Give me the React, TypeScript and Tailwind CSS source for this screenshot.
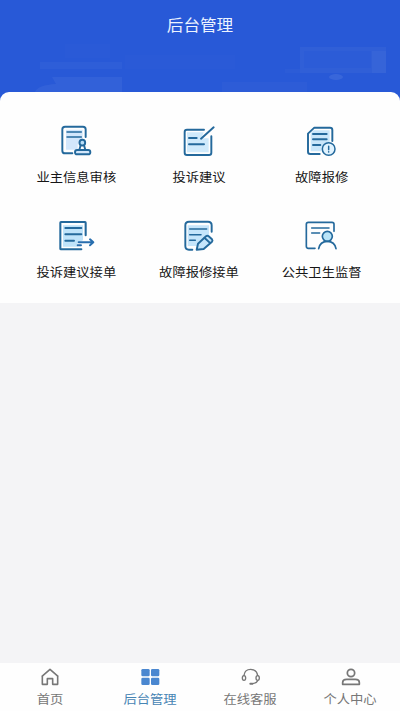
import React from "react";

const stroke = {
  fill: "none",
  stroke: "#24699c",
  strokeWidth: 5.8,
  strokeLinecap: "round" as const,
  strokeLinejoin: "round" as const,
};

const OwnerReviewIcon = () => (
  <svg className="w-[60px] h-[50px]" viewBox="-11 0 180 150" {...stroke}>
    <path d="M49 44H99V76L84 88V104H49Z" fill="#d3e7fb" stroke="none" />
    <path d="M108 66V43Q108 35 100 35H46Q38 35 38 43V107Q38 115 46 115H68" />
    <path d="M52 51H95M52 66H95" strokeWidth={4.5} />
    <circle cx="98" cy="83" r="8.5" fill="#b9def8" />
    <path d="M93 91L89 104M103 91L107 104" />
    <rect x="76" y="105" width="46" height="13" rx="6.5" fill="#d3e7fb" />
  </svg>
);

const ComplaintIcon = () => (
  <svg className="w-[60px] h-[50px]" viewBox="-3 0 180 150" {...stroke}>
    <path d="M51 52H101L94 70H116V112H51Z" fill="#d0eafb" stroke="none" />
    <path d="M102 44H51Q44 44 44 51V113Q44 120 51 120H117Q124 120 124 113V64" />
    <path d="M57 69H80M57 88H102" />
    <path d="M93 71L131 37" />
  </svg>
);

const RepairIcon = () => (
  <svg className="w-[60px] h-[50px]" viewBox="5 0 180 150" {...stroke}>
    <path d="M61 55L70 46H118V86L94 100V109H61Z" fill="#c9e6fa" stroke="none" />
    <path d="M126 78V45Q126 38 119 38H72L53 56V110Q53 117 60 117H88" />
    <path d="M68 57H109M68 73H109M68 90H90" />
    <circle cx="115" cy="102" r="19" fill="#e0f3ff" strokeWidth={4.5} />
    <path d="M115 94V104M115 110V111" strokeWidth={4.5} />
  </svg>
);

const ComplaintOrderIcon = () => (
  <svg className="w-[60px] h-[50px]" viewBox="-11 0 180 150" {...stroke}>
    <path d="M40 46H100V91L84 98V110H40Z" fill="#bfe3fa" stroke="none" />
    <path d="M108 76V38Q108 36 106 36H34Q32 36 32 38V116Q32 118 34 118H95" strokeWidth={6.2} />
    <path d="M47 54H95M47 73H95M47 92H73" />
    <path d="M87 97H130M121 88L131 97L121 106M84 106H94" stroke="#286eae" />
  </svg>
);

const RepairOrderIcon = () => (
  <svg className="w-[60px] h-[50px]" viewBox="-3 0 180 150" {...stroke}>
    <path d="M53 46H117V82L80 108H53Z" fill="#c5e5fb" stroke="none" />
    <path d="M125 65V46Q125 35 114 35H57Q46 35 46 46V108Q46 119 57 119H67" />
    <path d="M59 57H110M59 74H93M59 91H76" strokeWidth={4.5} />
    <path d="M80 119L84 101L108 79Q112 76 116 79L126 88Q129 92 126 95L101 117Z" fill="#c5e5fb" />
    <path d="M104 84L119 98" />
  </svg>
);

const HealthIcon = () => (
  <svg className="w-[60px] h-[50px]" viewBox="5 0 180 150" {...stroke}>
    <path d="M131 64V43Q131 37 125 37H54Q48 37 48 43V109Q48 115 54 115H74" strokeWidth={5} />
    <path d="M64 54H116M64 69H88" strokeWidth={4.5} />
    <circle cx="111" cy="79" r="15" fill="#b9e4f8" strokeWidth={5} />
    <path d="M85 116Q89 94 111 94Q133 94 137 116" strokeWidth={5} />
  </svg>
);

const services = [
  { label: "业主信息审核", icon: OwnerReviewIcon },
  { label: "投诉建议", icon: ComplaintIcon },
  { label: "故障报修", icon: RepairIcon },
  { label: "投诉建议接单", icon: ComplaintOrderIcon },
  { label: "故障报修接单", icon: RepairOrderIcon },
  { label: "公共卫生监督", icon: HealthIcon },
];

const HomeIcon = () => (
  <svg className="w-6 h-6" viewBox="114 30 72 72" fill="none" stroke="#777" strokeWidth="4.8" strokeLinejoin="round">
    <path d="M125 65L150 43L175 65M127 63V88H142V71H158V88H173V63" />
  </svg>
);

const GridIcon = () => (
  <svg className="w-6 h-6" viewBox="414 30 72 72" fill="#4a87d0">
    <rect x="424" y="42" width="25" height="22" rx="4" />
    <rect x="453" y="42" width="25" height="22" rx="4" />
    <rect x="424" y="68" width="25" height="22" rx="4" />
    <rect x="453" y="68" width="25" height="22" rx="4" />
  </svg>
);

const HeadsetIcon = () => (
  <svg className="w-6 h-6" viewBox="114 30 72 72" fill="none" stroke="#777" strokeWidth="4" strokeLinecap="round">
    <path d="M132 61Q134 43 152 43Q170 43 173 61M173 77Q170 84 158 86" />
    <ellipse cx="132" cy="69" rx="5" ry="7" />
    <ellipse cx="173" cy="69" rx="5" ry="7" />
    <path d="M151 86H157" strokeWidth="6" />
  </svg>
);

const UserIcon = () => (
  <svg className="w-6 h-6" viewBox="414 30 72 72" fill="none" stroke="#777" strokeWidth="5.2" strokeLinejoin="round">
    <circle cx="453" cy="54" r="11" />
    <path d="M428 88V83Q428 73 440 73H466Q478 73 478 83V88Z" />
  </svg>
);

const tabs = [
  { label: "首页", icon: HomeIcon, active: false },
  { label: "后台管理", icon: GridIcon, active: true },
  { label: "在线客服", icon: HeadsetIcon, active: false },
  { label: "个人中心", icon: UserIcon, active: false },
];

// Faint skyline behind the header title
const HeaderBackdrop = () => (
  <svg className="absolute inset-0 w-full h-full" viewBox="0 0 400 110" fill="#fff">
    <rect x="65" y="44" width="45" height="14" opacity="0.01" />
    <rect x="40" y="62" width="82" height="7" opacity="0.03" />
    <rect x="125" y="55" width="110" height="14" opacity="0.01" />
    <path d="M52 77H122V92H35Q38 85 56 84Z" opacity="0.05" />
    <rect x="222" y="82" width="85" height="10" opacity="0.025" />
    <path d="M285 69H300V47H386V73H285Z" opacity="0.02" />
    <path d="M300 47H386V73H300ZM304 51V68H371V51Z" fillRule="evenodd" opacity="0.02" />
    <rect x="372" y="51" width="14" height="22" opacity="0.03" />
    <ellipse cx="336" cy="77" rx="7" ry="3" opacity="0.08" />
  </svg>
);

export default function App() {
  return (
    <div className="w-[400px] h-[711px] flex flex-col bg-[#f4f4f6] overflow-hidden font-['Noto_Sans_CJK_SC',sans-serif]">
      <header className="relative h-[110px] shrink-0 bg-[#2859d7]">
        <HeaderBackdrop />
        <h1 className="relative pt-3 text-center text-[16.6px] leading-6 text-[#edf4ff]">
          <span className="inline-block scale-y-[0.93]">后台管理</span>
        </h1>
      </header>

      <main className="relative -mt-[18px] h-[211px] shrink-0 rounded-t-[9px] bg-[#fefefe] pt-[23px] pl-[15px] pr-[17px]">
        <div className="grid grid-cols-3 gap-y-[23px]">
          {services.map(({ label, icon: Icon }) => (
            <div key={label} className="flex flex-col items-center gap-[2px]">
              <Icon />
              <span className="text-[13.3px] leading-5 text-[#161616] whitespace-nowrap scale-y-[0.92]">{label}</span>
            </div>
          ))}
        </div>
      </main>

      <nav className="mt-auto h-12 shrink-0 flex bg-[#fefefe]">
        {tabs.map(({ label, icon: Icon, active }) => (
          <div key={label} className="flex-1 flex flex-col items-center pt-[2px]">
            <Icon />
            <span className={`text-[13.3px] leading-5 scale-y-[0.92] ${active ? "text-[#4785b4]" : "text-[#777]"}`}>{label}</span>
          </div>
        ))}
      </nav>
    </div>
  );
}
